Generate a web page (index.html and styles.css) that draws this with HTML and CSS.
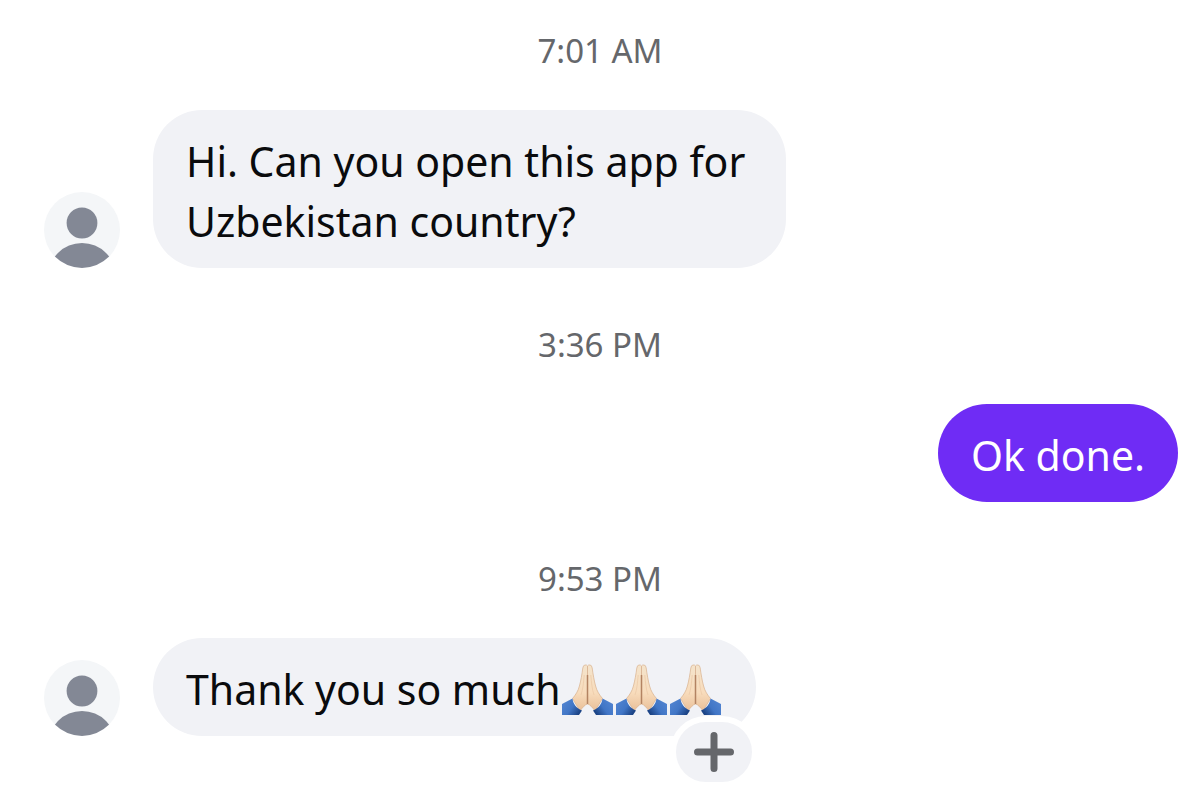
FILE: index.html
```html
<!DOCTYPE html>
<html lang="en">
<head>
	<meta charset="UTF-8">
	<meta name="viewport" content="width=device-width, initial-scale=1">
	<title>Chat</title>
	<link rel="stylesheet" href="styles.css">
</head>
<body>
	<!-- shared drawings -->
	<svg class="defs" aria-hidden="true">
		<defs>
			<linearGradient id="skin" x1="0" y1="0" x2="0" y2="1">
				<stop offset="0" stop-color="#f4e4cc"/>
				<stop offset="0.6" stop-color="#f8dcbc"/>
				<stop offset="1" stop-color="#e9bf98"/>
			</linearGradient>
			<linearGradient id="cuffLeft" x1="0" y1="0" x2="1" y2="0.6">
				<stop offset="0" stop-color="#5587d3"/>
				<stop offset="0.6" stop-color="#4176c6"/>
				<stop offset="1" stop-color="#1d4587"/>
			</linearGradient>
			<linearGradient id="cuffRight" x1="1" y1="0" x2="0" y2="0.6">
				<stop offset="0" stop-color="#5587d3"/>
				<stop offset="0.6" stop-color="#4176c6"/>
				<stop offset="1" stop-color="#1d4587"/>
			</linearGradient>
			<clipPath id="round">
				<circle cx="38" cy="38" r="38"/>
			</clipPath>
		</defs>
		<symbol id="person" viewBox="0 0 76 76">
			<circle cx="38" cy="38" r="38" fill="#f4f6f8"/>
			<g clip-path="url(#round)" fill="#838895">
				<circle cx="38" cy="31" r="15.4"/>
				<circle cx="38" cy="85" r="34"/>
			</g>
		</symbol>
		<symbol id="hands" viewBox="0 0 54 52">
			<path d="M26.5 3 Q25.5 1.6 24 2 Q22.3 2 21.8 5 C21 11 19.8 18 18.4 23 C17.2 28 14.5 32 11.5 35.5 L19 48 C21.5 44.5 24 41.5 26.5 41Z" fill="url(#skin)" stroke="#d9b08d" stroke-width="0.7"/>
			<path d="M26.5 3 Q27.5 1.6 29 2 Q30.7 2 31.2 5 C32 11 33.2 18 34.6 23 C35.8 28 38.5 32 41.5 35.5 L34 48 C31.5 44.5 29 41.5 26.5 41Z" fill="url(#skin)" stroke="#d9b08d" stroke-width="0.7"/>
			<path d="M26.5 3.5 V12" stroke="#dcb899" stroke-width="1" fill="none"/>
			<path d="M26.5 12 V41" stroke="#b38362" stroke-width="1.5" fill="none"/>
			<path d="M23.2 12 C22.5 20 22 26 20 32 M29.8 12 C30.5 20 31 26 33 32" stroke="#eccaa8" stroke-width="0.8" fill="none"/>
			<path d="M1 41 L11.5 35.5 C12 40.5 15 45 21 47.5 L18 52 H1Z" fill="url(#cuffLeft)"/>
			<path d="M52 41 L41.5 35.5 C41 40.5 38 45 32 47.5 L35 52 H52Z" fill="url(#cuffRight)"/>
		</symbol>
	</svg>

	<main class="chat">
		<time class="time" datetime="07:01">7:01 AM</time>
		<div class="row">
			<svg class="avatar" role="img" aria-label="Avatar"><use href="#person"/></svg>
			<p class="bubble">Hi. Can you open this app for Uzbekistan country?</p>
		</div>

		<time class="time" datetime="15:36">3:36 PM</time>
		<div class="row mine">
			<p class="bubble">Ok done.</p>
		</div>

		<time class="time" datetime="21:53">9:53 PM</time>
		<div class="row">
			<svg class="avatar" role="img" aria-label="Avatar"><use href="#person"/></svg>
			<div class="bubble with-emoji">
				<p>Thank you so much</p>
				<svg class="emoji" role="img" aria-label="Folded hands"><use href="#hands"/></svg>
				<svg class="emoji" role="img" aria-label="Folded hands"><use href="#hands"/></svg>
				<svg class="emoji" role="img" aria-label="Folded hands"><use href="#hands"/></svg>
				<button class="react" type="button" aria-label="Add reaction">
					<svg class="plus" viewBox="0 0 40 40">
						<path d="M20 3.5 V36.5 M3.5 20 H36.5" stroke="#65676b" stroke-width="7" stroke-linecap="round"/>
					</svg>
				</button>
			</div>
		</div>
	</main>
</body>
</html>
```
FILE: styles.css
```css
* {
	box-sizing: border-box;
	margin: 0;
	padding: 0;
}
body {
	background: #fff;
	color: #0a0b0d;
	font-family: "Noto Sans", "Open Sans", sans-serif;
}
.defs {
	display: block;
	width: 0;
	height: 0;
}
.chat {
	display: flex;
	flex-direction: column;
	padding: 0 22px 68px 44px;
}
.time {
	padding: 55px 0 37px;
	margin-right: 22px;
	color: #65676b;
	font-size: 33px;
	line-height: 44px;
	text-align: center;
}
.time:first-child {
	padding-top: 29px;
}
.row {
	display: flex;
	align-items: flex-end;
	gap: 33px;
}
.avatar {
	flex: none;
	width: 76px;
	height: 76px;
}
.bubble {
	position: relative;
	max-width: 633px;
	padding: 21px 33px 17px;
	border-radius: 49px;
	background: #f1f2f6;
	font-size: 41px;
	line-height: 60px;
}
.mine {
	justify-content: flex-end;
}
.mine .bubble {
	background: #6f2cf5;
	color: #fff;
}
.with-emoji {
	display: flex;
	align-items: center;
}
.emoji {
	flex: none;
	width: 54px;
	height: 52px;
}
/* sits over the bubble's lower right corner */
.react {
	position: absolute;
	right: -2px;
	bottom: -52px;
	display: flex;
	align-items: center;
	justify-content: center;
	width: 88px;
	height: 72px;
	border: 6px solid #fff;
	border-radius: 36px;
	background: #f1f2f6;
	cursor: pointer;
}
.plus {
	width: 40px;
	height: 40px;
}
```
